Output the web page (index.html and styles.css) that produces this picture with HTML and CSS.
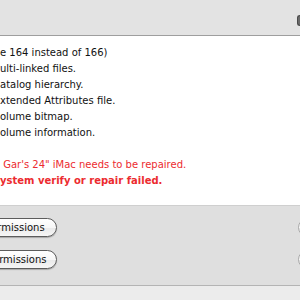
FILE: index.html
```html
<!DOCTYPE html>
<html lang="en">
<head>
    <meta charset="UTF-8">
    <title>Disk Utility - First Aid</title>
    <link rel="stylesheet" href="styles.css">
</head>
<body>
    <div class="window">
        <div class="toolbar">
            <div class="toolbar-tab"></div>
        </div>

        <div class="log">
            <div class="log-line">e 164 instead of 166)</div>
            <div class="log-line">ulti-linked files.</div>
            <div class="log-line">atalog hierarchy.</div>
            <div class="log-line">xtended Attributes file.</div>
            <div class="log-line">olume bitmap.</div>
            <div class="log-line">olume information.</div>
            <div class="log-line">&nbsp;</div>
            <div class="log-line warning">&nbsp;Gar's 24" iMac needs to be repaired.</div>
            <div class="log-line error">ystem verify or repair failed.</div>
        </div>

        <div class="actions">
            <div class="action-row">
                <button class="pill-button">Verify Disk Permissions</button>
                <button class="pill-button disabled">Verify Disk</button>
            </div>
            <div class="action-row">
                <button class="pill-button">Repair Disk Permissions</button>
                <button class="pill-button disabled">Repair Disk</button>
            </div>
        </div>

        <div class="footer"></div>
    </div>
</body>
</html>
```

FILE: styles.css
```css
* {
    margin: 0;
    padding: 0;
    box-sizing: border-box;
}

body {
    font-family: 'DejaVu Sans', Verdana, sans-serif;
    font-size: 10px;
    color: #111;
    width: 300px;
    height: 300px;
    overflow: hidden;
}

.window {
    display: flex;
    flex-direction: column;
    height: 300px;
    overflow: hidden;
}

.toolbar {
    height: 36px;
    background: #e3e3e3;
    border-bottom: 1px solid #9e9e9e;
    display: flex;
    justify-content: flex-end;
    align-items: flex-start;
    padding-top: 15px;
    overflow: hidden;
}

.toolbar-tab {
    width: 12px;
    height: 11px;
    margin-right: -9px;
    border: 1px solid #4a4a4a;
    border-right: none;
    border-radius: 3px 0 0 3px;
    background: #6a6a6a;
    flex-shrink: 0;
}

.log {
    background: #fff;
    padding: 9px 0 16px 0;
    white-space: nowrap;
}

.log-line {
    line-height: 16px;
    height: 16px;
}

.log-line.warning {
    color: #ec2b2f;
}

.log-line.error {
    color: #ec2b2f;
    font-weight: bold;
}

.actions {
    height: 81px;
    background: #dfdfdf;
    border-top: 1px solid #cfcfcf;
    border-bottom: 1px solid #b4b4b4;
    padding-top: 12px;
    display: flex;
    flex-direction: column;
    gap: 13px;
}

.action-row {
    display: flex;
    justify-content: space-between;
    align-items: center;
}

.pill-button {
    font-family: 'DejaVu Sans', Verdana, sans-serif;
    font-size: 10px;
    color: #111;
    width: 140px;
    height: 19px;
    margin-left: -83px;
    flex-shrink: 0;
    border: 1px solid #5c5c5c;
    border-radius: 10px;
    background: linear-gradient(#ffffff 0%, #f7f7f7 50%, #e9e9e9 51%, #f6f6f6 100%);
    box-shadow: 0 1px 1px rgba(0, 0, 0, 0.25);
    text-align: center;
    white-space: nowrap;
}

.pill-button.disabled {
    margin-left: 0;
    margin-right: -138px;
    border-color: #a9a9a9;
    color: #999;
    box-shadow: none;
}

.footer {
    flex: 1;
    background: #ececec;
}
```
